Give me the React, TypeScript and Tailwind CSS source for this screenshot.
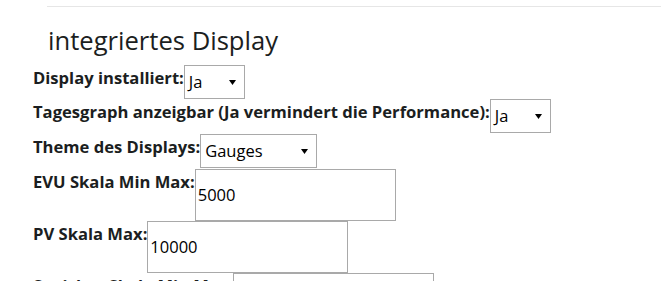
import React from 'react'

const font = "font-['Open_Sans','Noto_Sans',sans-serif]"

function Select({ value, width }: { value: string; width: string }) {
  return (
    <div
      className={`flex h-[34px] ${width} shrink-0 items-center justify-between border border-[#a9a9a9] bg-white pl-[4px] pr-[8px] text-[16.5px] font-normal text-black`}
    >
      <span>{value}</span>
      <svg width="7" height="5" viewBox="0 0 7 5" className="mt-[1px]">
        <path d="M0 0h7L3.5 5z" fill="#000" />
      </svg>
    </div>
  )
}

function Input({ value }: { value: string }) {
  return (
    <div className="flex h-[52px] w-[201px] shrink-0 items-center border border-[#a9a9a9] bg-white pl-[2px] text-[16.5px] font-normal text-black">
      {value}
    </div>
  )
}

function Row({ label, className = '', children }: { label: string; className?: string; children: React.ReactNode }) {
  return (
    <div className={`flex items-start ${className}`}>
      <label className="whitespace-nowrap pt-[1px] text-[16.6px] font-bold leading-[24px] text-[#1b1e21]">{label}</label>
      {children}
    </div>
  )
}

export default function App() {
  return (
    <div className={`h-[281px] w-[661px] overflow-hidden bg-white pt-[6px] ${font}`}>
      <div className="ml-[47px] h-px bg-[#e6e6e6]" />
      <h3 className="ml-[48px] mt-[16px] text-[25.6px] font-normal leading-[36px] text-[#1b1e21]">integriertes Display</h3>
      <div className="mt-[6px] pl-[33px]">
        <Row label="Display installiert:">
          <Select value="Ja" width="w-[61px]" />
        </Row>
        <Row label="Tagesgraph anzeigbar (Ja vermindert die Performance):">
          <Select value="Ja" width="w-[61px]" />
        </Row>
        <Row label="Theme des Displays:" className="mt-[1px]">
          <Select value="Gauges" width="w-[117px]" />
        </Row>
        <Row label="EVU Skala Min Max:" className="mt-[1px]">
          <Input value="5000" />
        </Row>
        <Row label="PV Skala Max:">
          <Input value="10000" />
        </Row>
        <Row label="Speicher Skala Min Max:">
          <Input value="0" />
        </Row>
      </div>
    </div>
  )
}
